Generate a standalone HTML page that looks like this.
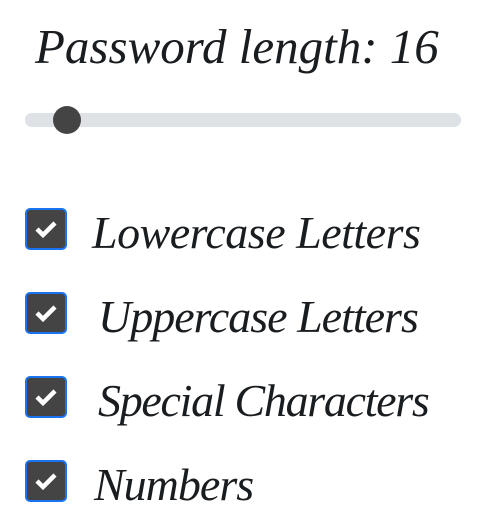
<!DOCTYPE html><html><head><style>
body{margin:0;width:480px;height:524px;background:#fff;position:relative;overflow:hidden;font-family:"Liberation Serif",serif;font-style:italic;color:#1a1d20}
.t{position:absolute;white-space:nowrap;font-size:46px;letter-spacing:-1px}
.track{position:absolute;left:25px;top:113px;width:436px;height:14px;border-radius:7px;background:#dee2e6}
.thumb{position:absolute;left:53px;top:106px;width:28px;height:28px;border-radius:50%;background:#444}
.cb{position:absolute;left:25px;width:38px;height:38px;border:2px solid #1a73f0;border-radius:5px;background:#444}
.cb svg{position:absolute;left:8px;top:9px}
</style></head><body>
<div class="t" style="left:35px;top:18px;font-size:49px;letter-spacing:0">Password length: 16</div>
<div class="track"></div><div class="thumb"></div>
<div class="cb" style="top:208px"><svg width="22" height="20" viewBox="0 0 22 20"><path d="M2 10l6 6 12-12" stroke="#fff" stroke-width="4.5" fill="none"/></svg></div>
<div class="cb" style="top:292px"><svg width="22" height="20" viewBox="0 0 22 20"><path d="M2 10l6 6 12-12" stroke="#fff" stroke-width="4.5" fill="none"/></svg></div>
<div class="cb" style="top:376px"><svg width="22" height="20" viewBox="0 0 22 20"><path d="M2 10l6 6 12-12" stroke="#fff" stroke-width="4.5" fill="none"/></svg></div>
<div class="cb" style="top:460px"><svg width="22" height="20" viewBox="0 0 22 20"><path d="M2 10l6 6 12-12" stroke="#fff" stroke-width="4.5" fill="none"/></svg></div>
<div class="t" style="left:92px;top:206px;letter-spacing:-0.5px">Lowercase Letters</div>
<div class="t" style="left:98px;top:290px">Uppercase Letters</div>
<div class="t" style="left:98px;top:374px;letter-spacing:-1.3px">Special Characters</div>
<div class="t" style="left:94px;top:458px">Numbers</div>
</body></html>
